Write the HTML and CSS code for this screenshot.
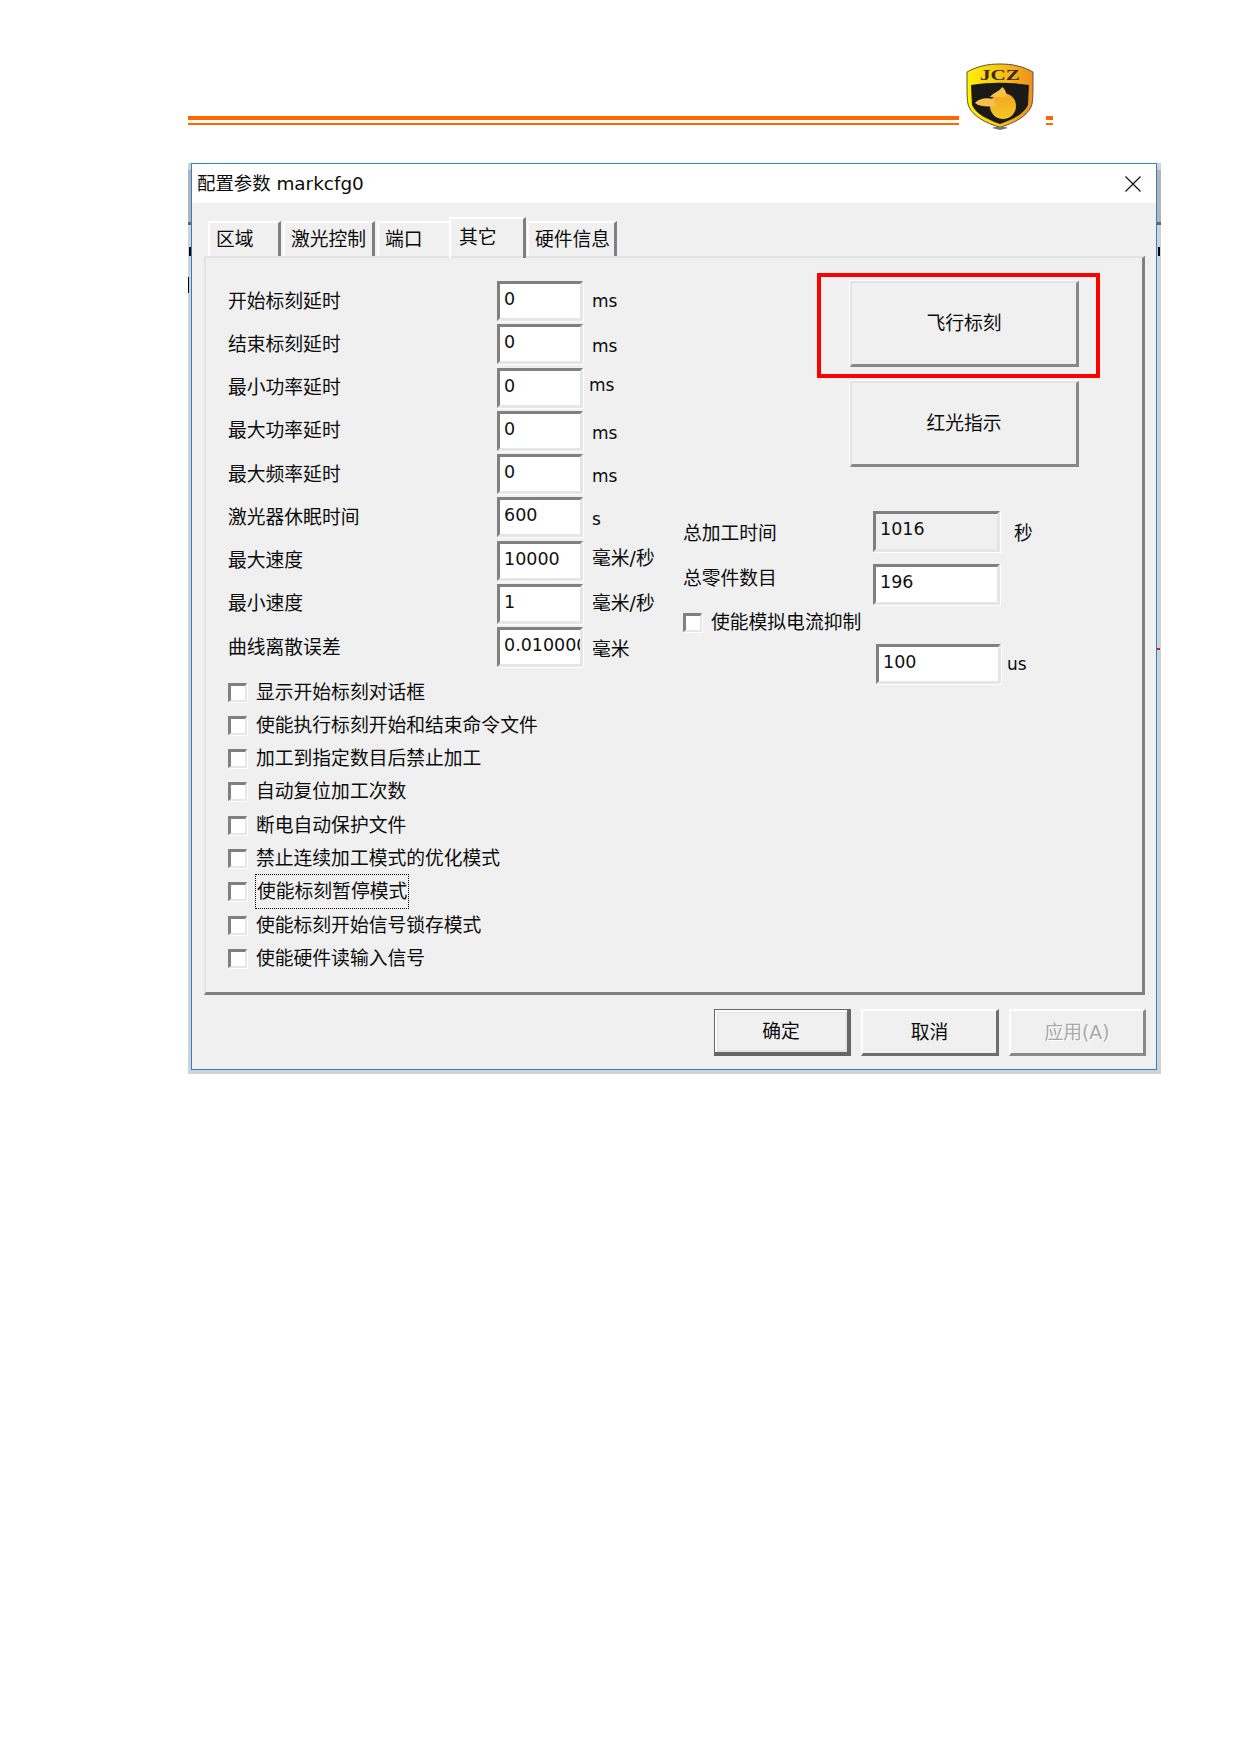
FILE: index.html
```html
<!DOCTYPE html>
<html lang="zh-CN">
<head>
  <meta charset="UTF-8">
  <title>配置参数 markcfg0</title>
  <link rel="stylesheet" href="styles.css">
</head>
<body>
  <div class="doc-header">
    <div class="rule rule-long"></div>
    <svg class="logo" viewBox="0 0 68 68" width="68" height="68">
      <defs>
        <linearGradient id="gold" x1="0" y1="0" x2="1" y2="0">
          <stop offset="0" stop-color="#fff200"/>
          <stop offset="0.45" stop-color="#f8c91a"/>
          <stop offset="1" stop-color="#ee8f1c"/>
        </linearGradient>
        <linearGradient id="fruit" x1="0" y1="0" x2="0" y2="1">
          <stop offset="0" stop-color="#f2a51f"/>
          <stop offset="1" stop-color="#f7c52a"/>
        </linearGradient>
      </defs>
      <path d="M34 66 L33 65 C20 61 8 55 3 45 C1 40 1 36 1 10 C12 4 22 2 34 2 C46 2 56 4 67 10 C67 36 67 40 65 45 C60 55 48 61 35 65 Z" fill="url(#gold)" stroke="#5a5238" stroke-width="1"/>
      <path d="M5 23 C24 20 44 20 63 23 L62 43 C58 52 46 58 34 62 C22 58 10 52 6 43 Z" fill="#1b1a17"/>
      <text x="14" y="18" class="logo-text" textLength="40" lengthAdjust="spacingAndGlyphs">JCZ</text>
      <circle cx="37" cy="44" r="13" fill="url(#fruit)"/>
      <path d="M9 41 C12 37 20 35 28 37 L30 44 C22 45 14 45 9 41 Z" fill="#f7c04a"/>
      <path d="M24 35 C28 30 33 30 36 25 C39 27 41 31 40 35 Z" fill="#f7c04a"/>
      <path d="M26 66 C30 64 38 64 42 66 L34 68 Z" fill="#77736a"/>
    </svg>
    <div class="rule rule-short"></div>
  </div>

  <div class="backdrop">
    <span class="stray stray-l1"></span>
    <span class="stray stray-l2"></span>
    <span class="stray stray-l3"></span>
    <span class="stray stray-l4"></span>
    <span class="stray stray-r1"></span>
    <span class="stray stray-r2"></span>
    <span class="stray stray-r3"></span>
    <span class="stray stray-r4"></span>

    <div class="dialog">
      <div class="titlebar">
        <span class="title">配置参数 markcfg0</span>
        <svg class="close" viewBox="0 0 16 16" width="16" height="16">
          <path d="M0.5 0.5 L15.5 15.5 M15.5 0.5 L0.5 15.5" stroke="#111" stroke-width="1.2" fill="none"/>
        </svg>
      </div>

      <div class="tabs">
        <div class="tab">区域</div>
        <div class="tab">激光控制</div>
        <div class="tab tab-before-active">端口</div>
        <div class="tab tab-active">其它</div>
        <div class="tab">硬件信息</div>
      </div>

      <div class="tab-page">
        <div class="col-left">
          <div class="form-rows">
            <span class="lbl">开始标刻延时</span><div class="field">0</div><span class="unit latin">ms</span>
            <span class="lbl">结束标刻延时</span><div class="field">0</div><span class="unit latin low">ms</span>
            <span class="lbl">最小功率延时</span><div class="field">0</div><span class="unit latin high shift">ms</span>
            <span class="lbl">最大功率延时</span><div class="field">0</div><span class="unit latin low">ms</span>
            <span class="lbl">最大频率延时</span><div class="field">0</div><span class="unit latin low">ms</span>
            <span class="lbl">激光器休眠时间</span><div class="field">600</div><span class="unit latin low">s</span>
            <span class="lbl">最大速度</span><div class="field">10000</div><span class="unit high">毫米/秒</span>
            <span class="lbl">最小速度</span><div class="field">1</div><span class="unit">毫米/秒</span>
            <span class="lbl">曲线离散误差</span><div class="field">0.010000</div><span class="unit low">毫米</span>
          </div>

          <div class="check-list">
            <div class="check-row"><span class="box"></span><span class="check-text">显示开始标刻对话框</span></div>
            <div class="check-row"><span class="box"></span><span class="check-text">使能执行标刻开始和结束命令文件</span></div>
            <div class="check-row"><span class="box"></span><span class="check-text">加工到指定数目后禁止加工</span></div>
            <div class="check-row"><span class="box"></span><span class="check-text">自动复位加工次数</span></div>
            <div class="check-row"><span class="box"></span><span class="check-text">断电自动保护文件</span></div>
            <div class="check-row"><span class="box"></span><span class="check-text">禁止连续加工模式的优化模式</span></div>
            <div class="check-row"><span class="box"></span><span class="check-text focused">使能标刻暂停模式</span></div>
            <div class="check-row"><span class="box"></span><span class="check-text">使能标刻开始信号锁存模式</span></div>
            <div class="check-row"><span class="box"></span><span class="check-text">使能硬件读输入信号</span></div>
          </div>
        </div>

        <div class="col-right">
          <div class="big-buttons">
            <div class="big-btn">飞行标刻<span class="red-mark"></span></div>
            <div class="big-btn">红光指示</div>
          </div>

          <div class="totals">
            <span class="lbl lbl-low">总加工时间</span><div class="field field-off">1016</div><span class="unit">秒</span>
            <span class="lbl lbl-top">总零件数目</span><div class="field">196</div>
          </div>

          <div class="check-row check-solo"><span class="box"></span><span class="check-text">使能模拟电流抑制</span></div>

          <div class="us-row">
            <div class="field field-us">100</div><span class="unit latin">us</span>
          </div>
        </div>
      </div>

      <div class="footer">
        <div class="btn btn-default">确定</div>
        <div class="btn btn-wide">取消</div>
        <div class="btn btn-off">应用(A)</div>
      </div>
    </div>
  </div>
</body>
</html>
```

FILE: styles.css
```css
body {
  margin: 0;
  background: #fff;
  color: #0c0c0c;
  font-family: "DejaVu Sans", "Noto Sans CJK SC", sans-serif;
  font-size: 18.8px;
}

/* document header */
.doc-header {
  display: flex;
  align-items: flex-start;
  height: 163px;
  padding-left: 188px;
  box-sizing: border-box;
}

.rule {
  height: 3px;
  margin-top: 116px;
  border-top: 4px solid #ff6600;
  border-bottom: 2px solid #ff6600;
}

.rule-long {
  width: 771px;
}

.rule-short {
  width: 7px;
  margin-left: 12px;
}

.logo {
  margin: 62px 0 0 7px;
}

.logo-text {
  font-family: "Liberation Serif", serif;
  font-size: 15.5px;
  font-weight: bold;
  fill: #3a2a0a;
}

/* grey shadow and leftovers of the window behind */
.backdrop {
  position: relative;
  width: 966px;
  height: 907px;
  margin-left: 188px;
  padding: 0 4px 4px 3px;
  background: #d2d2d2;
}

.stray {
  position: absolute;
  background: #000;
}

.stray-l1 { left: 0; top: 7px; width: 3px; height: 52px; background: #b4b4b4; }
.stray-l2 { left: 0; top: 59px; width: 3px; height: 3px; background: #666; }
.stray-l3 { left: 1px; top: 84px; width: 2px; height: 9px; }
.stray-l4 { left: 0; top: 114px; width: 1px; height: 16px; }
.stray-r1 { right: 0; top: 7px; width: 4px; height: 52px; background: #b4b4b4; }
.stray-r2 { right: 0; top: 59px; width: 4px; height: 3px; background: #666; }
.stray-r3 { right: 1px; top: 84px; width: 2px; height: 9px; }
.stray-r4 { right: 1px; top: 485px; width: 3px; height: 2px; background: #e8141c; }

/* dialog window */
.dialog {
  box-sizing: border-box;
  position: relative;
  width: 966px;
  height: 907px;
  border: 1px solid #2b80d0;
  background: #f0f0f0;
}

.titlebar {
  display: flex;
  align-items: center;
  justify-content: space-between;
  height: 39px;
  padding: 0 15px 0 5px;
  background: #fff;
}

.title {
  padding-bottom: 4px;
  font-size: 18.4px;
}

/* tabs */
.tabs {
  display: grid;
  grid-template-columns: 75px 94px 72px 78px 92px;
  height: 39px;
  margin: 14px 0 0 16px;
}

.tab {
  display: flex;
  align-items: center;
  box-sizing: border-box;
  height: 35px;
  margin: 4px 2px 0 0;
  padding: 0 0 4px 6px;
  border-top: 2px solid #fff;
  border-left: 2px solid #fff;
  border-right: 3px solid #808080;
  white-space: nowrap;
}

.tab-before-active {
  margin-right: 0;
  border-right: none;
}

.tab-active {
  position: relative;
  z-index: 1;
  height: 41px;
  margin: 0 1px 0 0;
  padding: 0 0 6px 8px;
}

.tab-page {
  display: grid;
  grid-template-columns: 455px 1fr;
  box-sizing: border-box;
  width: 941px;
  height: 739px;
  margin-left: 12px;
  padding: 23px 0 0 22px;
  border-top: 2px solid #e3e3e3;
  border-left: 2px solid #e3e3e3;
  border-right: 3px solid #808080;
  border-bottom: 3px solid #808080;
}

/* left column */
.form-rows {
  display: grid;
  grid-template-columns: 269px 86px auto;
  grid-auto-rows: 40px;
  row-gap: 3.25px;
  align-items: center;
}

.lbl {
  padding-bottom: 4px;
  white-space: nowrap;
}

.field {
  box-sizing: border-box;
  height: 40px;
  padding: 1px 0 0 4px;
  border-top: 3px solid #808080;
  border-left: 3px solid #808080;
  border-right: 3px solid #e6e6e6;
  border-bottom: 3px solid #e6e6e6;
  box-shadow: 1px 1px 0 #fff;
  background: #fff;
  color: #111;
  font-size: 17.5px;
  line-height: 29px;
  white-space: nowrap;
  overflow: hidden;
}

.field-off {
  background: #f0f0f0;
}

.unit {
  margin-left: 9px;
  padding-bottom: 4px;
}

.latin {
  padding-bottom: 0;
  font-size: 17px;
}

.low {
  margin-top: 4px;
}

.high {
  margin-top: -5px;
}

.shift {
  margin-left: 6px;
}

.check-list {
  display: grid;
  grid-auto-rows: 20px;
  row-gap: 13.3px;
  margin-top: 15px;
}

.check-row {
  display: flex;
  align-items: center;
  height: 20px;
  white-space: nowrap;
}

.check-text {
  padding-bottom: 4px;
}

.box {
  box-sizing: border-box;
  width: 19px;
  height: 19px;
  margin-right: 9px;
  border-top: 3px solid #808080;
  border-left: 3px solid #808080;
  border-right: 2px solid #e6e6e6;
  border-bottom: 2px solid #e6e6e6;
  box-shadow: 1px 1px 0 #fff;
  background: #fff;
}

.focused {
  margin: 0 -2px 0 -1px;
  padding: 1px 1px 5px;
  border: 1px dotted #000;
}

/* right column */
.big-buttons {
  display: grid;
  row-gap: 14px;
  width: 229px;
  margin-left: 167px;
}

.big-btn {
  position: relative;
  display: flex;
  align-items: center;
  justify-content: center;
  box-sizing: border-box;
  height: 86px;
  padding-bottom: 4px;
  border-top: 2px solid #e3e3e3;
  border-left: 2px solid #e3e3e3;
  border-right: 3px solid #888;
  border-bottom: 3px solid #888;
  box-shadow: -1px -1px 0 #fff;
}

.red-mark {
  position: absolute;
  left: -35px;
  top: -10px;
  box-sizing: border-box;
  width: 283px;
  height: 105px;
  border: 4px solid #f00;
}

.totals {
  display: grid;
  grid-template-columns: 190px 127px auto;
  grid-auto-rows: 41px;
  row-gap: 12px;
  align-items: center;
  margin-top: 44px;
}

.totals .field {
  height: 41px;
}

.totals .unit {
  margin-left: 14px;
  padding-bottom: 0;
}

.lbl-low {
  padding-bottom: 0;
}

.lbl-top {
  margin-top: -12px;
}

.check-solo {
  margin-top: 7px;
}

.us-row {
  display: flex;
  align-items: center;
  margin: 12px 0 0 193px;
}

.field-us {
  width: 125px;
}

.us-row .unit {
  margin-left: 6px;
}

/* bottom buttons */
.footer {
  display: flex;
  justify-content: flex-end;
  gap: 10px;
  margin-top: 14px;
  padding-right: 10px;
}

.btn {
  display: flex;
  align-items: center;
  justify-content: center;
  box-sizing: border-box;
  width: 137px;
  height: 47px;
  padding-bottom: 4px;
  border-top: 2px solid #fff;
  border-left: 2px solid #fff;
  border-right: 3px solid #6e6e6e;
  border-bottom: 3px solid #6e6e6e;
}

.btn-wide {
  width: 138px;
}

.btn-default {
  border: 1px solid #666;
  border-right: 4px solid #666;
  border-bottom: 4px solid #666;
  box-shadow: inset 2px 2px 0 #fff, inset 3px 3px 0 #e3e3e3, inset -2px -2px 0 #e3e3e3;
}

.btn-off {
  color: #a8a8a8;
  text-shadow: 1px 1px 0 #fff;
  border-right-color: #8a8a8a;
  border-bottom-color: #8a8a8a;
}
```
